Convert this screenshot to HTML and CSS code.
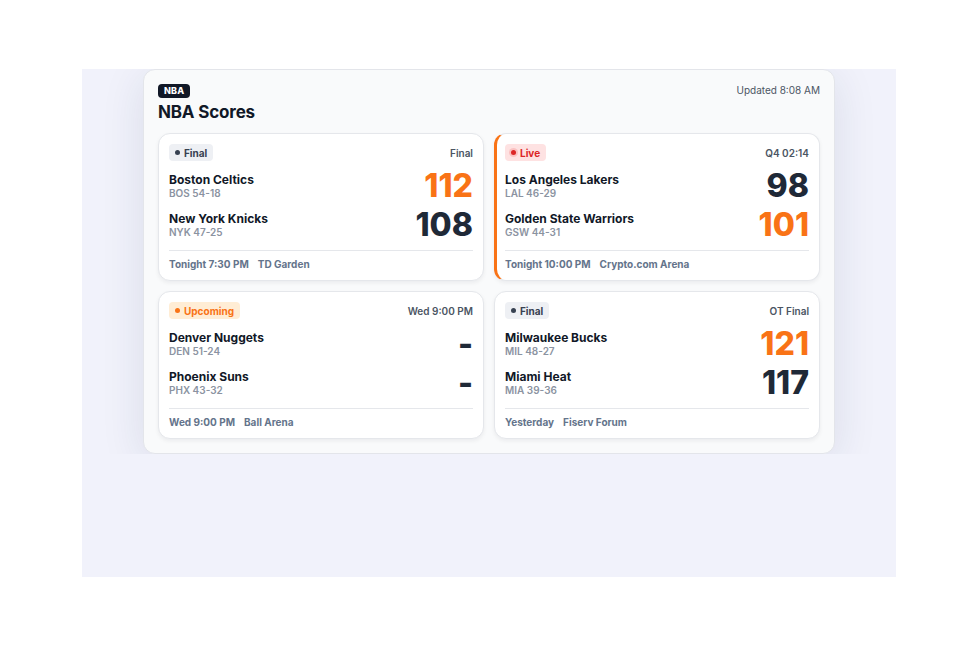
FILE: index.html
```html
<!DOCTYPE html>
<html lang="en">
<head>
    <meta charset="utf-8" />
    <title>NBA Scores</title>
    <link rel="stylesheet" href="styles.css">
</head>
<body>
    <div class="stage">
        <div class="board">
            <div class="board_head">
                <div class="brand">
                    <span class="league">NBA</span>
                    <h1 class="title">NBA Scores</h1>
                </div>
                <span class="updated">Updated 8:08 AM</span>
            </div>

            <div class="games">
                <div class="game">
                    <div class="game_top">
                        <span class="pill final"><i class="dot"></i>Final</span>
                        <span class="meta">Final</span>
                    </div>
                    <div class="teams">
                        <div class="team">
                            <div><div class="name">Boston Celtics</div><div class="rec">BOS 54-18</div></div>
                            <span class="score win">112</span>
                        </div>
                        <div class="team">
                            <div><div class="name">New York Knicks</div><div class="rec">NYK 47-25</div></div>
                            <span class="score">108</span>
                        </div>
                    </div>
                    <div class="game_foot"><span>Tonight 7:30 PM</span><span>TD Garden</span></div>
                </div>

                <div class="game live_game">
                    <div class="game_top">
                        <span class="pill live"><i class="dot"></i>Live</span>
                        <span class="meta">Q4 02:14</span>
                    </div>
                    <div class="teams">
                        <div class="team">
                            <div><div class="name">Los Angeles Lakers</div><div class="rec">LAL 46-29</div></div>
                            <span class="score">98</span>
                        </div>
                        <div class="team">
                            <div><div class="name">Golden State Warriors</div><div class="rec">GSW 44-31</div></div>
                            <span class="score win">101</span>
                        </div>
                    </div>
                    <div class="game_foot"><span>Tonight 10:00 PM</span><span>Crypto.com Arena</span></div>
                </div>

                <div class="game">
                    <div class="game_top">
                        <span class="pill upcoming"><i class="dot"></i>Upcoming</span>
                        <span class="meta">Wed 9:00 PM</span>
                    </div>
                    <div class="teams">
                        <div class="team">
                            <div><div class="name">Denver Nuggets</div><div class="rec">DEN 51-24</div></div>
                            <span class="score">-</span>
                        </div>
                        <div class="team">
                            <div><div class="name">Phoenix Suns</div><div class="rec">PHX 43-32</div></div>
                            <span class="score">-</span>
                        </div>
                    </div>
                    <div class="game_foot"><span>Wed 9:00 PM</span><span>Ball Arena</span></div>
                </div>

                <div class="game">
                    <div class="game_top">
                        <span class="pill final"><i class="dot"></i>Final</span>
                        <span class="meta">OT Final</span>
                    </div>
                    <div class="teams">
                        <div class="team">
                            <div><div class="name">Milwaukee Bucks</div><div class="rec">MIL 48-27</div></div>
                            <span class="score win">121</span>
                        </div>
                        <div class="team">
                            <div><div class="name">Miami Heat</div><div class="rec">MIA 39-36</div></div>
                            <span class="score">117</span>
                        </div>
                    </div>
                    <div class="game_foot"><span>Yesterday</span><span>Fiserv Forum</span></div>
                </div>
            </div>
        </div>
    </div>
</body>
</html>
```

FILE: styles.css
```css
* {
    margin: 0;
    padding: 0;
    box-sizing: border-box;
    font-family: Inter, 'Liberation Sans', sans-serif;
}

body {
    background: #ffffff;
}

.stage {
    width: 814px;
    height: 508px;
    margin: 69px 0 0 82px;
    background: #f1f2fb;
    padding: 0 61px;
}

.board {
    background: #f9fafb;
    border: 1px solid #e3e5ea;
    border-radius: 12px;
    padding: 14px;
    box-shadow: 0 8px 44px rgba(30, 41, 80, 0.11);
    clip-path: inset(0 -100px 0 -100px);
}

    .board_head {
        display: flex;
        justify-content: space-between;
        align-items: flex-start;
    }

.brand {
    display: flex;
    flex-direction: column;
    align-items: flex-start;
}

.league {
    display: block;
    background: #111827;
    color: #fff;
    font-size: 9px;
    font-weight: 800;
    line-height: 12px;
    padding: 1px 6px;
    border-radius: 4px;
    letter-spacing: 0.02em;
}

.title {
    font-size: 17px;
    font-weight: 700;
    line-height: 22px;
    color: #111827;
    margin-top: 3px;
    letter-spacing: -0.01em;
}

.updated {
    font-size: 10px;
    line-height: 12px;
    color: #4b5563;
}

.games {
    display: grid;
    grid-template-columns: 1fr 1fr;
    gap: 10px;
    margin-top: 10px;
}

.game {
    background: #fff;
    border: 1px solid #e5e7eb;
    border-radius: 12px;
    padding: 10px 10px 9px;
    box-shadow: 0 2px 4px rgba(15, 23, 42, 0.06);
}

.live_game {
    border-left: 3px solid #f97316;
    padding-left: 8px;
}

.game_top {
    display: flex;
    justify-content: space-between;
    align-items: center;
}

.pill {
    display: inline-flex;
    align-items: center;
    gap: 4px;
    height: 17px;
    padding: 0 6px;
    border-radius: 4px;
    font-size: 10px;
    font-weight: 700;
}

    .pill .dot {
        width: 5px;
        height: 5px;
        border-radius: 50%;
        background: currentColor;
    }

.final {
    background: #eef0f4;
    color: #374151;
}

.live {
    background: #fee2e2;
    color: #dc2626;
}

    .live .dot {
        box-shadow: 0 0 0 2px rgba(239, 68, 68, 0.2);
    }

.upcoming {
    background: #ffedd5;
    color: #f97316;
}

.meta {
    font-size: 10px;
    font-weight: 600;
    color: #4b5563;
}

.teams {
    display: flex;
    flex-direction: column;
    gap: 9px;
    margin-top: 10px;
}

.team {
    display: flex;
    justify-content: space-between;
    align-items: center;
    min-height: 30px;
}

.name {
    font-size: 12px;
    font-weight: 700;
    line-height: 15px;
    color: #111827;
}

.rec {
    font-size: 10px;
    font-weight: 600;
    line-height: 13px;
    color: #8b93a1;
}

.score {
    font-size: 32px;
    font-weight: 800;
    line-height: 30px;
    color: #1f2937;
}

    .score.win {
        color: #f97316;
    }

.game_foot {
    display: flex;
    gap: 9px;
    margin-top: 10px;
    padding-top: 7px;
    border-top: 1px solid #e5e7eb;
    font-size: 10px;
    font-weight: 700;
    line-height: 13px;
    color: #64748b;
}
```
